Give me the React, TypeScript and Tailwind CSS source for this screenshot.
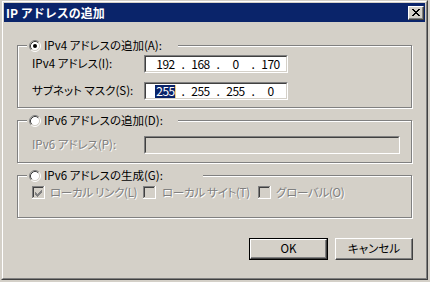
import React from "react";

const DIS = "text-[#808080] [text-shadow:1px_1px_0_#ffffff]";

function Radio({ checked }: { checked?: boolean }) {
  return (
    <svg width="12" height="12" viewBox="0 0 12 12" className="shrink-0 block">
      <circle cx="6" cy="6" r="4.5" fill="#ffffff" />
      <path d="M2.11 9.89 A5.5 5.5 0 0 1 9.89 2.11" fill="none" stroke="#808080" strokeWidth="1" />
      <path d="M9.89 2.11 A5.5 5.5 0 0 1 2.11 9.89" fill="none" stroke="#ffffff" strokeWidth="1" />
      <path d="M2.82 9.18 A4.5 4.5 0 0 1 9.18 2.82" fill="none" stroke="#404040" strokeWidth="1" />
      <path d="M9.18 2.82 A4.5 4.5 0 0 1 2.82 9.18" fill="none" stroke="#d4d0c8" strokeWidth="1" />
      {checked && <circle cx="6" cy="6" r="2" fill="#000000" />}
    </svg>
  );
}

function Check({ checked }: { checked?: boolean }) {
  return (
    <svg width="13" height="13" viewBox="0 0 13 13" shapeRendering="crispEdges" className="shrink-0 block">
      <rect x="0" y="0" width="13" height="13" fill="#ffffff" />
      <path d="M0 0h12v1H1v11H0z" fill="#808080" />
      <rect x="1" y="1" width="11" height="11" fill="#d4d0c8" />
      <path d="M1 1h10v1H2v9H1z" fill="#404040" />
      <rect x="2" y="2" width="9" height="9" fill="#d4d0c8" />
      {checked && (
        <path
          d="M3 6h1v3h-1z M4 7h1v3h-1z M5 8h1v3h-1z M6 7h1v3h-1z M7 6h1v3h-1z M8 5h1v3h-1z M9 4h1v3h-1z"
          fill="#808080"
        />
      )}
    </svg>
  );
}

function Octets({ values, selectFirst }: { values: string[]; selectFirst?: boolean }) {
  return (
    <div className="flex h-full items-center pl-[4px] text-[12px] tracking-[-0.5px]">
      {values.map((v, i) => (
        <React.Fragment key={i}>
          <div className="w-[31px] flex justify-center items-center">
            {selectFirst && i === 0 ? (
              <span className="flex items-center">
                <span className="bg-[#0a246a] text-white h-[13px] flex items-center pl-[1px]">{v}</span>
                <span className="w-[1px] h-[13px] bg-[#e6d28a]" />
              </span>
            ) : (
              <span>{v}</span>
            )}
          </div>
          {i < 3 && <div className="w-[4px] flex justify-center">.</div>}
        </React.Fragment>
      ))}
    </div>
  );
}

function Field({ children, wide, disabled }: { children?: React.ReactNode; wide?: boolean; disabled?: boolean }) {
  return (
    <div
      className={
        (wide ? "w-[256px] " : "w-[144px] ") +
        "h-[18px] border border-t-[#808080] border-l-[#808080] border-b-white border-r-white"
      }
    >
      <div
        className={
          (disabled ? "bg-[#d4d0c8] " : "bg-white ") +
          "h-full border border-t-[#404040] border-l-[#404040] border-b-[#d4d0c8] border-r-[#d4d0c8]"
        }
      >
        {children}
      </div>
    </div>
  );
}

function GroupTitle({ label, checked, widthClass }: { label: string; checked?: boolean; widthClass: string }) {
  return (
    <div className={"absolute left-[9px] top-[-7px] h-[13px] bg-[#d4d0c8] flex items-center pl-[2px] " + widthClass}>
      <Radio checked={checked} />
      <span className="ml-[3px] whitespace-nowrap">{label}</span>
    </div>
  );
}

const GROUP =
  "relative w-[395px] border border-[#808080] shadow-[inset_1px_1px_0_#ffffff,1px_1px_0_#ffffff]";

export default function App() {
  return (
    <div className="w-[430px] h-[282px] bg-[#d4d0c8] overflow-hidden font-['Noto_Sans_CJK_JP','MS_UI_Gothic',sans-serif] text-[11.5px] leading-none text-black [font-feature-settings:'palt']">
      <div className="ml-[1px] w-[427px] h-[280px] border border-t-[#d4d0c8] border-l-[#d4d0c8] border-r-[#404040] border-b-[#404040]">
        <div className="h-full border border-t-white border-l-white border-r-[#808080] border-b-[#808080] p-[1px] flex flex-col">
          {/* title bar */}
          <div className="h-[19px] bg-[#0a246a] flex items-center justify-between pl-[2px] pr-[1px]">
            <span className="text-white text-[12px] font-bold whitespace-nowrap [font-feature-settings:normal]">IP アドレスの追加</span>
            <div className="w-[16px] h-[14px] bg-[#d4d0c8] border border-t-white border-l-white border-r-[#404040] border-b-[#404040] shadow-[inset_-1px_-1px_0_#808080] pl-[3px] pt-[2px]">
              <svg width="8" height="7" viewBox="0 0 8 7" shapeRendering="crispEdges" className="block">
                <path
                  d="M0 0h2v1h-2z M6 0h2v1h-2z M1 1h2v1h-2z M5 1h2v1h-2z M2 2h4v1h-4z M3 3h2v1h-2z M2 4h4v1h-4z M1 5h2v1h-2z M5 5h2v1h-2z M0 6h2v1h-2z M6 6h2v1h-2z"
                  fill="#000000"
                />
              </svg>
            </div>
          </div>

          {/* body */}
          <div className="flex flex-col px-[13px] pt-[23px]">
            {/* IPv4 group */}
            <div className={GROUP + " pt-[9px] pb-[7px] pl-[14px]"}>
              <GroupTitle label="IPv4 アドレスの追加(A):" checked widthClass="w-[151px]" />
              <div className="flex items-center h-[18px]">
                <span className="w-[112px] whitespace-nowrap">IPv4 アドレス(I):</span>
                <Field>
                  <Octets values={["192", "168", "0", "170"]} />
                </Field>
              </div>
              <div className="flex items-center h-[18px] mt-[9px]">
                <span className="w-[112px] whitespace-nowrap">サブネット マスク(S):</span>
                <Field>
                  <Octets values={["255", "255", "255", "0"]} selectFirst />
                </Field>
              </div>
            </div>

            {/* IPv6 add group */}
            <div className={GROUP + " mt-[12px] pt-[15px] pb-[8px] pl-[14px]"}>
              <GroupTitle label="IPv6 アドレスの追加(D):" widthClass="w-[151px]" />
              <div className="flex items-center h-[18px]">
                <span className={"w-[112px] whitespace-nowrap " + DIS}>IPv6 アドレス(P):</span>
                <Field wide disabled />
              </div>
            </div>

            {/* IPv6 generate group */}
            <div className={GROUP + " mt-[12px] pt-[10px] pb-[18px] pl-[14px]"}>
              <GroupTitle label="IPv6 アドレスの生成(G):" widthClass="w-[176px]" />
              <div className="flex items-center h-[13px]">
                <div className="w-[111px] flex items-center">
                  <Check checked />
                  <span className={"ml-[5px] whitespace-nowrap tracking-[-0.3px] " + DIS}>ローカル リンク(L)</span>
                </div>
                <div className="w-[115px] flex items-center">
                  <Check />
                  <span className={"ml-[6px] whitespace-nowrap tracking-[-0.3px] " + DIS}>ローカル サイト(T)</span>
                </div>
                <div className="flex items-center">
                  <Check />
                  <span className={"ml-[5px] whitespace-nowrap tracking-[-0.3px] " + DIS}>グローバル(O)</span>
                </div>
              </div>
            </div>

            {/* buttons */}
            <div className="w-[396px] flex justify-end gap-[7px] mt-[20px]">
              <div className="w-[79px] h-[22px] border border-black">
                <div className="h-full border border-t-white border-l-white border-r-[#404040] border-b-[#404040] shadow-[inset_-1px_-1px_0_#808080] flex items-center justify-center">
                  OK
                </div>
              </div>
              <div className="w-[78px] h-[22px] border border-t-white border-l-white border-r-[#404040] border-b-[#404040] shadow-[inset_-1px_-1px_0_#808080] flex items-center justify-center">
                キャンセル
              </div>
            </div>
          </div>
        </div>
      </div>
    </div>
  );
}
